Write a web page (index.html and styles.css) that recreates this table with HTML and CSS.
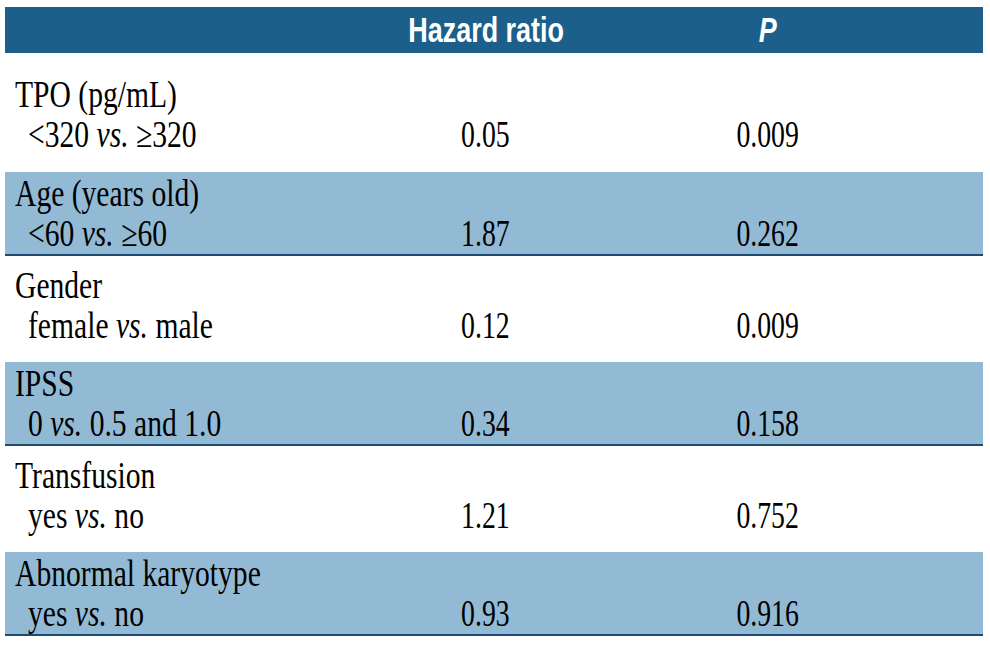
FILE: index.html
```html
<!DOCTYPE html>
<html lang="en">
<head>
<meta charset="utf-8">
<title>Hazard ratio table</title>
<link rel="stylesheet" href="styles.css">
</head>
<body>
<div class="table">
  <div class="head">
    <div class="hcell"></div>
    <div class="hcell center"><span class="sq">Hazard ratio</span></div>
    <div class="hcell center"><span class="sq"><i>P</i></span></div>
  </div>

  <div class="row white first">
    <div class="label">
      <div class="line"><span class="cx">TPO (pg/mL)</span></div>
      <div class="line sub"><span class="cx">&lt;320 <i>vs.</i> ≥320</span></div>
    </div>
    <div class="val"><span class="cn">0.05</span></div>
    <div class="val"><span class="cn">0.009</span></div>
  </div>

  <div class="row blue">
    <div class="label">
      <div class="line"><span class="cx">Age (years old)</span></div>
      <div class="line sub"><span class="cx">&lt;60 <i>vs.</i> ≥60</span></div>
    </div>
    <div class="val"><span class="cn">1.87</span></div>
    <div class="val"><span class="cn">0.262</span></div>
  </div>

  <div class="row white">
    <div class="label">
      <div class="line"><span class="cx">Gender</span></div>
      <div class="line sub"><span class="cx">female <i>vs.</i> male</span></div>
    </div>
    <div class="val"><span class="cn">0.12</span></div>
    <div class="val"><span class="cn">0.009</span></div>
  </div>

  <div class="row blue">
    <div class="label">
      <div class="line"><span class="cx">IPSS</span></div>
      <div class="line sub"><span class="cx">0 <i>vs.</i> 0.5 and 1.0</span></div>
    </div>
    <div class="val"><span class="cn">0.34</span></div>
    <div class="val"><span class="cn">0.158</span></div>
  </div>

  <div class="row white">
    <div class="label">
      <div class="line"><span class="cx">Transfusion</span></div>
      <div class="line sub"><span class="cx">yes <i>vs.</i> no</span></div>
    </div>
    <div class="val"><span class="cn">1.21</span></div>
    <div class="val"><span class="cn">0.752</span></div>
  </div>

  <div class="row blue">
    <div class="label">
      <div class="line"><span class="cx">Abnormal karyotype</span></div>
      <div class="line sub"><span class="cx">yes <i>vs.</i> no</span></div>
    </div>
    <div class="val"><span class="cn">0.93</span></div>
    <div class="val"><span class="cn">0.916</span></div>
  </div>
</div>
</body>
</html>
```

FILE: styles.css
```css
html, body {
  margin: 0;
  padding: 0;
  background: #ffffff;
}

body {
  padding: 7px 0 0 5px;
}

.table {
  width: 978px;
  color: #000000;
}

.head,
.row {
  display: grid;
  grid-template-columns: 380px 200px 366px 1fr;
}

.head {
  background: #1c5f8b;
  height: 46px;
  color: #ffffff;
  font-family: "Liberation Sans", Arial, sans-serif;
  font-weight: bold;
  font-size: 35px;
  line-height: 46px;
}

.hcell.center {
  text-align: center;
}

.sq {
  display: inline-block;
  white-space: nowrap;
  transform: scaleX(0.77);
  transform-origin: center;
}

.row {
  font-family: "Liberation Serif", serif;
  font-size: 37px;
  line-height: 40px;
}

.row.white {
  background: #ffffff;
  padding: 10px 0 16px;
}

.row.white.first {
  padding-top: 22px;
  padding-bottom: 17px;
}

.row.blue {
  background: #93bad5;
  padding: 2px 0 0;
  border-bottom: 2px solid #1b4a72;
}

.label {
  padding-left: 10px;
}

.line {
  height: 40px;
  white-space: nowrap;
}

.line.sub {
  padding-left: 13px;
}

.cx {
  display: inline-block;
  white-space: nowrap;
  transform: scaleX(0.8);
  transform-origin: left center;
}

.val {
  align-self: end;
  text-align: center;
  height: 40px;
}

.cn {
  display: inline-block;
  white-space: nowrap;
  transform: scaleX(0.75);
  transform-origin: center;
}
```
